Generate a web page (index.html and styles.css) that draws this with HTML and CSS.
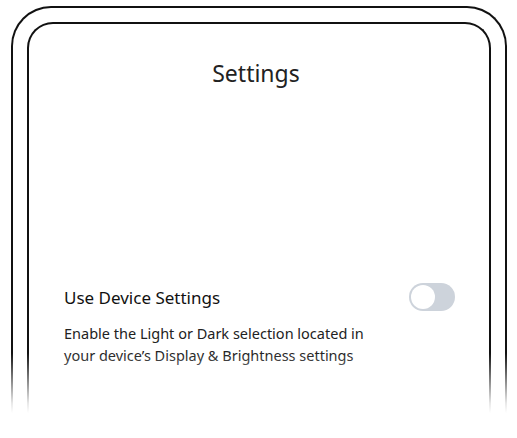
FILE: index.html
```html
<!DOCTYPE html>
<html>
<head>
<meta charset="utf-8">
<link rel="stylesheet" href="styles.css">
</head>
<body>
<div class="phone">
  <div class="screen">
    <h1 class="title">Settings</h1>
    <div class="row">
      <div class="label">Use Device Settings</div>
      <div class="toggle"><div class="knob"></div></div>
    </div>
    <p class="desc">Enable the Light or Dark selection located in<br>your device’s Display &amp; Brightness settings</p>
  </div>
  <div class="fade"></div>
</div>
</body>
</html>
```
FILE: styles.css
```css
html, body {
  margin: 0;
  padding: 0;
  background: #fff;
  overflow: hidden;
}
body {
  width: 517px;
  height: 438px;
  font-family: "Noto Sans", "Open Sans", sans-serif;
  color: #222;
}
.phone {
  position: relative;
  margin: 6px 0 0 11px;
  width: 496px;
  height: 426px;
  border: 2.5px solid #111;
  border-bottom: 0;
  border-radius: 40px 40px 0 0;
  box-sizing: border-box;
  padding: 14px 14px 0;
}
.screen {
  height: 100%;
  border: 2px solid #111;
  border-bottom: 0;
  border-radius: 26px 26px 0 0;
  box-sizing: border-box;
  padding: 0 36px 0 35px;
}
.title {
  margin: 0;
  padding: 32px 5px 0 0;
  text-align: center;
  font-weight: 400;
  font-size: 23px;
  line-height: 34px;
  color: #222;
}
.row {
  display: flex;
  align-items: center;
  justify-content: space-between;
  margin-top: 193px;
}
.label {
  font-size: 17px;
  color: #111;
}
.toggle {
  width: 46px;
  height: 28px;
  border-radius: 14px;
  background: #cdd3db;
  display: flex;
  align-items: center;
  padding: 2px;
  box-sizing: border-box;
  margin-right: -2px;
}
.knob {
  width: 24px;
  height: 24px;
  border-radius: 50%;
  background: #fff;
}
.desc {
  margin: 11px 0 0;
  font-size: 14.5px;
  line-height: 22px;
  color: #222;
}
.fade {
  position: absolute;
  left: -5px;
  right: -5px;
  top: 345px;
  bottom: 0;
  background: linear-gradient(to bottom, rgba(255,255,255,0) 0px, rgba(255,255,255,0.9) 50px, #fff 60px);
  pointer-events: none;
}
```
